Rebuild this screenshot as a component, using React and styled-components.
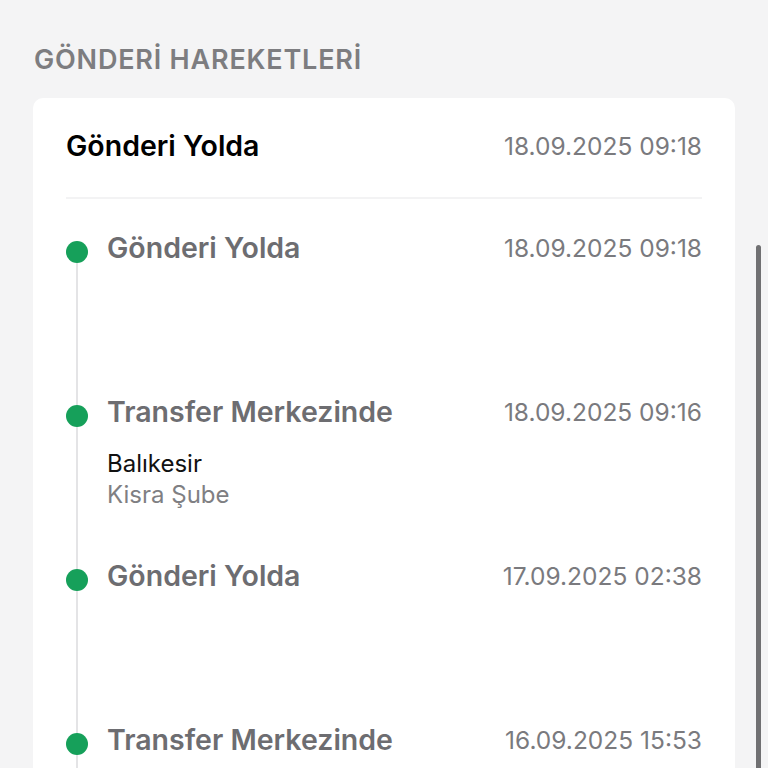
import React from 'react'
import styled, { createGlobalStyle } from 'styled-components'

const GlobalStyle = createGlobalStyle`
  html, body {
    margin: 0;
    padding: 0;
    background: #f4f4f5;
    font-family: Inter, "Noto Sans", "Liberation Sans", sans-serif;
    overflow: hidden;
  }
`

const events = [
  { title: 'Gönderi Yolda', date: '18.09.2025 09:18' },
  { title: 'Transfer Merkezinde', date: '18.09.2025 09:16', city: 'Balıkesir', branch: 'Kisra Şube' },
  { title: 'Gönderi Yolda', date: '17.09.2025 02:38' },
  { title: 'Transfer Merkezinde', date: '16.09.2025 15:53' },
]

const App = () => {
  return (
    <Page>
      <GlobalStyle />
      <SectionTitle>GÖNDERİ HAREKETLERİ</SectionTitle>
      <Card>
        <HeaderRow>
          <HeaderTitle>Gönderi Yolda</HeaderTitle>
          <DateText>18.09.2025 09:18</DateText>
        </HeaderRow>
        <Divider />
        <Timeline>
          {events.map((ev, i) => (
            <TimelineItem key={i} $first={i === 0}>
              <Dot />
              <ItemBody>
                <ItemRow>
                  <ItemTitle>{ev.title}</ItemTitle>
                  <DateText>{ev.date}</DateText>
                </ItemRow>
                {ev.city && (
                  <Location>
                    <City>{ev.city}</City>
                    <Branch>{ev.branch}</Branch>
                  </Location>
                )}
              </ItemBody>
            </TimelineItem>
          ))}
        </Timeline>
      </Card>
      <ScrollThumb />
    </Page>
  )
}

export default App

const Page = styled.div`
  position: relative;
  height: 768px;
  overflow: hidden;
  padding: 44px 33px 0 33px;
  box-sizing: border-box;
`

const SectionTitle = styled.h2`
  margin: 0 0 22px 1px;
  font-size: 27px;
  line-height: 32px;
  font-weight: 600;
  color: #7d7d80;
  letter-spacing: 0.8px;
`

const Card = styled.div`
  background: #ffffff;
  border-radius: 10px;
  padding: 0 33px;
`

const HeaderRow = styled.div`
  display: flex;
  justify-content: space-between;
  align-items: center;
  padding: 32px 0 35px;
  line-height: 32px;
`

const HeaderTitle = styled.span`
  font-size: 28.5px;
  font-weight: 600;
  color: #000000;
`

const DateText = styled.span`
  font-size: 24.5px;
  font-weight: 400;
  color: #7a7a7e;
`

const Divider = styled.div`
  height: 2px;
  background: #f3f3f4;
`

const Timeline = styled.div`
  padding-top: 33px;
`

const TimelineItem = styled.div`
  position: relative;
  display: flex;
  align-items: flex-start;
  gap: 19px;
  min-height: 164px;

  &::before {
    content: '';
    position: absolute;
    left: 10px;
    width: 2px;
    top: ${p => (p.$first ? '20px' : '0')};
    bottom: 0;
    background: #e4e4e6;
  }
`

const Dot = styled.span`
  position: relative;
  z-index: 1;
  flex: 0 0 22px;
  width: 22px;
  height: 22px;
  margin-top: 9px;
  border-radius: 50%;
  background: #16a05a;
`

const ItemBody = styled.div`
  flex: 1;
  display: flex;
  flex-direction: column;
`

const ItemRow = styled.div`
  display: flex;
  justify-content: space-between;
  align-items: center;
  line-height: 32px;
`

const ItemTitle = styled.span`
  font-size: 28.5px;
  font-weight: 600;
  color: #6d6d71;
`

const Location = styled.div`
  display: flex;
  flex-direction: column;
  margin-top: 20px;
  font-size: 24px;
  line-height: 31px;
`

const City = styled.span`
  color: #111111;
`

const Branch = styled.span`
  color: #7f7f83;
`

const ScrollThumb = styled.div`
  position: absolute;
  right: 7px;
  top: 245px;
  width: 5px;
  height: 560px;
  border-radius: 3px;
  background: #707072;
`
